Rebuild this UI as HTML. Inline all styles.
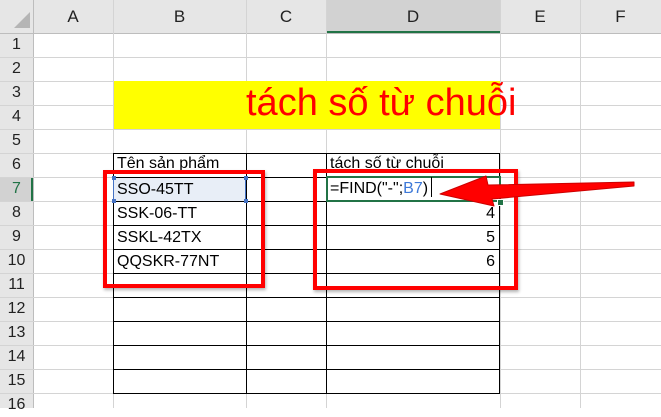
<!DOCTYPE html>
<html><head><meta charset="utf-8"><style>
body{margin:0;width:661px;height:408px;overflow:hidden;background:#fff;font-family:"Liberation Sans","DejaVu Sans",sans-serif;position:relative}
.a{position:absolute}
.hl{position:absolute;height:1px;background:#d4d4d4}
.vl{position:absolute;width:1px;background:#d4d4d4}
.bl{position:absolute;background:#000}
.ch{position:absolute;top:0;height:33px;line-height:33px;text-align:center;font-size:17px;color:#222}
.rh{position:absolute;left:0;width:33px;height:24px;line-height:24px;text-align:center;font-size:16px;color:#222}
.t{position:absolute;font-size:16px;line-height:24px;color:#000}
</style></head><body>
<div class="a" style="left:0;top:0;width:661px;height:33px;background:#e6e6e6"></div>
<div class="a" style="left:0;top:0;width:33px;height:408px;background:#e6e6e6"></div>
<div class="a" style="left:326px;top:0;width:174px;height:33px;background:#d2d2d2"></div>
<div class="a" style="left:326px;top:31px;width:174px;height:2px;background:#217346"></div>
<div class="a" style="left:0;top:177px;width:33px;height:24px;background:#d2d2d2"></div>
<div class="a" style="left:31px;top:177px;width:2px;height:24px;background:#217346"></div>
<svg class="a" style="left:14px;top:12px" width="17" height="17"><polygon points="16,0 16,16 0,16" fill="#b5b5b5"/></svg>
<div class="ch" style="left:33px;width:80px">A</div>
<div class="ch" style="left:113px;width:133px">B</div>
<div class="ch" style="left:246px;width:80px">C</div>
<div class="ch" style="left:326px;width:174px">D</div>
<div class="ch" style="left:500px;width:80px">E</div>
<div class="ch" style="left:580px;width:81px">F</div>
<div class="vl" style="left:33px;top:0;height:408px;background:#bdbdbd"></div>
<div class="hl" style="left:0;top:33px;width:661px;background:#bdbdbd"></div>
<div class="vl" style="left:113px;top:0;height:408px"></div>
<div class="vl" style="left:246px;top:0;height:408px"></div>
<div class="vl" style="left:326px;top:0;height:408px"></div>
<div class="vl" style="left:500px;top:0;height:408px"></div>
<div class="vl" style="left:580px;top:0;height:408px"></div>
<div class="hl" style="left:0;top:57px;width:661px"></div>
<div class="hl" style="left:0;top:81px;width:661px"></div>
<div class="hl" style="left:0;top:105px;width:661px"></div>
<div class="hl" style="left:0;top:129px;width:661px"></div>
<div class="hl" style="left:0;top:153px;width:661px"></div>
<div class="hl" style="left:0;top:177px;width:661px"></div>
<div class="hl" style="left:0;top:201px;width:661px"></div>
<div class="hl" style="left:0;top:225px;width:661px"></div>
<div class="hl" style="left:0;top:249px;width:661px"></div>
<div class="hl" style="left:0;top:273px;width:661px"></div>
<div class="hl" style="left:0;top:297px;width:661px"></div>
<div class="hl" style="left:0;top:321px;width:661px"></div>
<div class="hl" style="left:0;top:345px;width:661px"></div>
<div class="hl" style="left:0;top:369px;width:661px"></div>
<div class="hl" style="left:0;top:393px;width:661px"></div>
<div class="rh" style="top:33px">1</div><div class="rh" style="top:57px">2</div><div class="rh" style="top:81px">3</div><div class="rh" style="top:105px">4</div><div class="rh" style="top:129px">5</div><div class="rh" style="top:153px">6</div><div class="rh" style="top:177px;color:#217346">7</div><div class="rh" style="top:201px">8</div><div class="rh" style="top:225px">9</div><div class="rh" style="top:249px">10</div><div class="rh" style="top:273px">11</div><div class="rh" style="top:297px">12</div><div class="rh" style="top:321px">13</div><div class="rh" style="top:345px">14</div><div class="rh" style="top:369px">15</div><div class="rh" style="top:393px">16</div>
<div class="a" style="left:114px;top:81px;width:386px;height:48px;background:#ffff00"></div>
<div class="a" style="left:0;top:81px;width:661px;height:48px;line-height:48px;font-size:38px;color:#ff0000"><span style="position:absolute;left:246px;top:-2px;white-space:nowrap">tách số từ chuỗi</span></div>
<div class="bl" style="left:113px;top:153px;width:1px;height:241px"></div>
<div class="bl" style="left:246px;top:153px;width:1px;height:241px"></div>
<div class="bl" style="left:326px;top:153px;width:1px;height:241px"></div>
<div class="bl" style="left:499px;top:153px;width:1px;height:241px"></div>
<div class="bl" style="left:113px;top:153px;width:387px;height:1px"></div>
<div class="bl" style="left:113px;top:177px;width:387px;height:1px"></div>
<div class="bl" style="left:113px;top:201px;width:387px;height:1px"></div>
<div class="bl" style="left:113px;top:225px;width:387px;height:1px"></div>
<div class="bl" style="left:113px;top:249px;width:387px;height:1px"></div>
<div class="bl" style="left:113px;top:273px;width:387px;height:1px"></div>
<div class="bl" style="left:113px;top:297px;width:387px;height:1px"></div>
<div class="bl" style="left:113px;top:321px;width:387px;height:1px"></div>
<div class="bl" style="left:113px;top:345px;width:387px;height:1px"></div>
<div class="bl" style="left:113px;top:369px;width:387px;height:1px"></div>
<div class="bl" style="left:113px;top:393px;width:387px;height:1px"></div>
<div class="a" style="left:114px;top:178px;width:132px;height:23px;background:#e8eef7"></div>
<div class="a" style="left:113px;top:177px;width:133px;height:24px;border:1px solid #4472c4;box-sizing:border-box;border-top:none;border-bottom:none"></div>
<div class="a" style="left:112px;top:176px;width:4px;height:4px;background:#4472c4"></div>
<div class="a" style="left:244px;top:176px;width:4px;height:4px;background:#4472c4"></div>
<div class="a" style="left:112px;top:199px;width:4px;height:4px;background:#4472c4"></div>
<div class="a" style="left:244px;top:199px;width:4px;height:4px;background:#4472c4"></div>
<div class="a" style="left:326px;top:176px;width:175px;height:26px;border:2px solid #217346;box-sizing:border-box;background:#fff"></div>
<div class="a" style="left:497px;top:199px;width:5px;height:5px;background:#217346;border:1px solid #fff"></div>
<div class="t" style="left:117px;top:152px">Tên sản phẩm</div>
<div class="t" style="left:117px;top:178px">SSO-45TT</div>
<div class="t" style="left:117px;top:202px">SSK-06-TT</div>
<div class="t" style="left:117px;top:226px">SSKL-42TX</div>
<div class="t" style="left:117px;top:250px">QQSKR-77NT</div>
<div class="t" style="left:330px;top:152px">tách số từ chuỗi</div>
<div class="t" style="left:330px;top:177px">=FIND("-";<span style="color:#3c78d8">B7</span>)<span style="display:inline-block;width:1px;height:20px;background:#000;vertical-align:-4px;margin-left:3px"></span></div>
<div class="t" style="left:330px;top:202px;width:165px;text-align:right">4</div>
<div class="t" style="left:330px;top:226px;width:165px;text-align:right">5</div>
<div class="t" style="left:330px;top:250px;width:165px;text-align:right">6</div>
<div class="a" style="left:103px;top:170px;width:162px;height:118px;border:4px solid #ff0000;box-sizing:border-box;box-shadow:1px 2px 3px rgba(0,0,0,.3)"></div>
<div class="a" style="left:313px;top:169px;width:205px;height:121px;border:4px solid #ff0000;box-sizing:border-box;box-shadow:1px 2px 3px rgba(0,0,0,.3)"></div>
<svg class="a" style="left:0;top:0" width="661" height="408">
<polygon points="634,182 634,186 492,199 494,206 440,194 486,176 488,185" fill="#ff0000" stroke="#c00" stroke-width="1" stroke-linejoin="round"/>
</svg>
</body></html>
